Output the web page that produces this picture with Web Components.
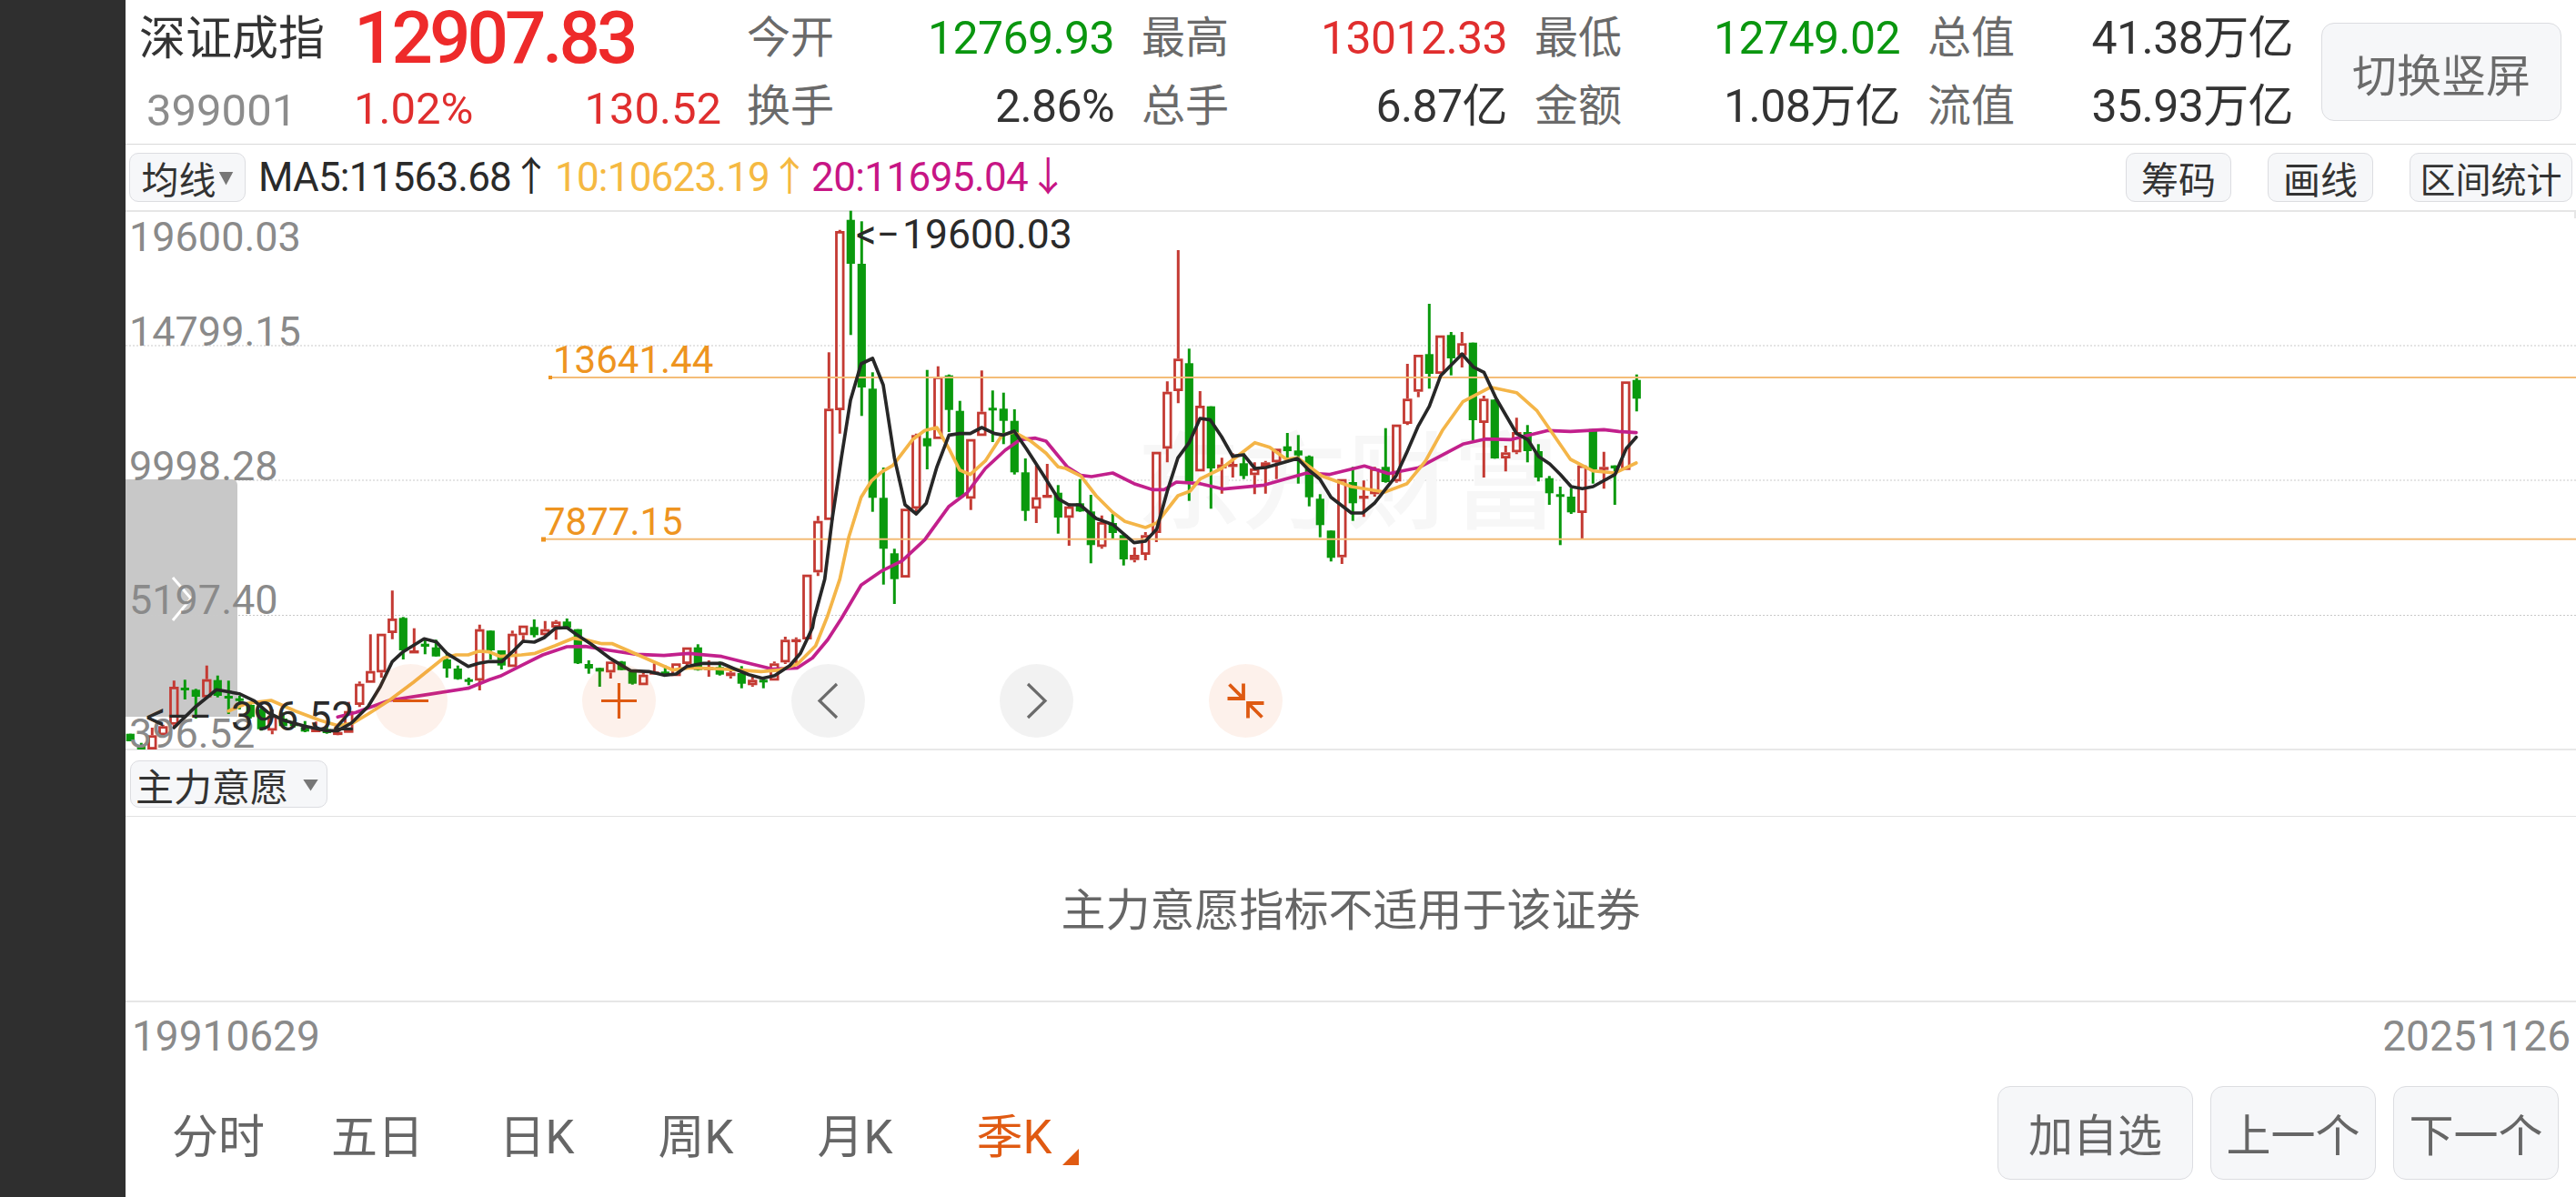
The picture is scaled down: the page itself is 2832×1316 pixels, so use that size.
<!DOCTYPE html>
<html lang="zh"><head><meta charset="utf-8"><title>深证成指</title>
<style>
html,body{margin:0;padding:0;background:#fff;overflow:hidden}
body{width:2832px;height:1316px;font-family:Roboto,"Noto Sans CJK SC",sans-serif;color:#333}
</style></head>
<body>
<kline-app>
  <quote-header></quote-header>
  <ma-toolbar></ma-toolbar>
  <kline-chart></kline-chart>
  <indicator-pane></indicator-pane>
  <date-axis></date-axis>
  <period-bar></period-bar>
</kline-app>
<script>
function def(name,css,html,init){
  customElements.define(name,class extends HTMLElement{
    constructor(){super();const r=this.attachShadow({mode:'open'});
      r.innerHTML='<style>'+css+'</style>'+(typeof html==='function'?html(this):html);}
    connectedCallback(){if(init&&!this._i){this._i=1;init(this)}}
  });
}
def('kline-app',`:host{display:flex;width:2832px;height:1316px}
 .side{width:138px;flex:none;background:#2f2f2f}
 .main{flex:1;min-width:0;display:flex;flex-direction:column}`,
 `<div class="side"></div><div class="main"><slot></slot></div>`);

def('pill-button',`:host{display:inline-flex;align-items:center;justify-content:center;box-sizing:border-box;
 background:#f6f7f9;border:1.5px solid #dcdde1;border-radius:10px;color:#333;white-space:nowrap}`,`<slot></slot>`);

def('drop-mark',`:host{display:inline-block;width:var(--w,16px);height:var(--h,15px);background:#777;clip-path:polygon(0 0,100% 0,50% 100%)}`,``);

def('quote-cell',`:host{display:flex;align-items:center;padding-right:30px;box-sizing:border-box;font-size:50px;letter-spacing:-.6px;white-space:nowrap}
 .l{width:94px;flex:none;font-size:48px;letter-spacing:0;color:#6a6a6a;line-height:1}
 .v{flex:1;text-align:right;line-height:1}
 :host([first]) .l{margin-left:-2px;width:96px}`,
 el=>`<span class="l">${el.getAttribute('label')}</span><span class="v" style="color:${el.getAttribute('color')||'#333'}">${el.getAttribute('value')}</span>`);

def('quote-header',`:host{display:flex;height:159px;box-sizing:border-box;border-bottom:1.5px solid #d9d9d9;flex:none}
 .left{width:685px;flex:none;box-sizing:border-box;padding:5px 30px 0 15px;display:grid;grid-template-columns:236px 404px;grid-template-rows:74px 76px;align-items:center}
 .name{font-size:51px;color:#333;line-height:1;white-space:nowrap}
 .price{font-size:80px;font-weight:500;letter-spacing:-4px;color:#ee2a2a;line-height:1;grid-column:2}
 .code{font-size:49px;color:#8c8c8c;line-height:1;padding:8px 0 0 8px}
 .sub{display:flex;justify-content:space-between;font-size:49px;color:#e02e2e;line-height:1;padding-top:5px}
 .cells{width:1728px;flex:none;padding-top:5px;display:grid;grid-template-columns:repeat(4,432px);grid-template-rows:74px 76px}
 pill-button{width:264px;height:108px;margin:25px 0 0 1px;font-size:49px;color:#6b6b6b;border-radius:14px}`,
 `<div class="left"><div class="name">深证成指</div><div class="price">12907.83</div>
  <div class="code">399001</div><div class="sub"><span>1.02%</span><span>130.52</span></div></div>
 <div class="cells">
  <quote-cell first label="今开" value="12769.93" color="#0a960f"></quote-cell>
  <quote-cell label="最高" value="13012.33" color="#e02e2e"></quote-cell>
  <quote-cell label="最低" value="12749.02" color="#0a960f"></quote-cell>
  <quote-cell label="总值" value="41.38万亿"></quote-cell>
  <quote-cell first label="换手" value="2.86%"></quote-cell>
  <quote-cell label="总手" value="6.87亿"></quote-cell>
  <quote-cell label="金额" value="1.08万亿"></quote-cell>
  <quote-cell label="流值" value="35.93万亿"></quote-cell>
 </div><pill-button>切换竖屏</pill-button>`);

def('ma-toolbar',`:host{display:flex;align-items:center;height:74px;box-sizing:border-box;border-bottom:2.5px solid #e6e6e6;flex:none;padding:0 4px}
 pill-button{height:54px;font-size:41px}
 .ma{width:128px;gap:3px;margin-right:14px}
 .ma drop-mark{margin-top:2px}
 .legend{display:flex;font-size:44px;letter-spacing:-.8px;white-space:nowrap;line-height:1}
 .a{color:#2a2a2a;width:326px}.b{color:#f5b942;width:282px}.c{color:#c71585;letter-spacing:-.6px}
 .tools{margin-left:auto;display:flex;gap:40px}
 .t2{width:116px}.t4{width:179px;font-size:39px}`,
 `<pill-button class="ma">均线<drop-mark></drop-mark></pill-button>
 <div class="legend"><span class="a">MA5:11563.68↑</span><span class="b">10:10623.19↑</span><span class="c">20:11695.04↓</span></div>
 <div class="tools"><pill-button class="t2">筹码</pill-button><pill-button class="t2">画线</pill-button><pill-button class="t4">区间统计</pill-button></div>`);

def('chart-fab',`:host{display:flex;width:81px;height:81px;border-radius:50%;align-items:center;justify-content:center;background:var(--bg)}
 ::slotted(svg){display:block}`,`<slot></slot>`);

def('kline-chart',`:host{display:block;position:relative;height:590px;flex:none}
 svg.c{display:block;width:2694px;height:590px;font-family:Roboto,sans-serif;overflow:visible}
 .fabs{position:absolute;left:272.5px;top:497px;display:flex;gap:148.5px}
 .o{--bg:rgba(232,96,28,.085)}.g{--bg:rgba(0,0,0,.052)}
 svg.i{width:81px;height:81px;fill:none;stroke-width:3.2}
 .o svg{stroke:#de5a12}.g svg{stroke:#6b6b6b}`,
 `<svg class="c" viewBox="138 233 2694 590" id="s"></svg>
 <div class="fabs">
 <chart-fab class="o"><svg class="i" viewBox="0 0 81 81"><path d="M21 40.5h39"/></svg></chart-fab>
 <chart-fab class="o"><svg class="i" viewBox="0 0 81 81"><path d="M21 40.5h39M40.5 21v39"/></svg></chart-fab>
 <chart-fab class="g"><svg class="i" viewBox="0 0 81 81"><path d="M50 22 31 40.5 50 59"/></svg></chart-fab>
 <chart-fab class="g"><svg class="i" viewBox="0 0 81 81"><path d="M31 22 50 40.5 31 59"/></svg></chart-fab>
 <chart-fab class="o"><svg class="i" viewBox="0 0 81 81" style="stroke-width:3.8"><path d="M38 38 22.5 22.5M38 21.500v16.500H20.500M43 43l15.500 15.500M43 59.500V43h17.500"/></svg></chart-fab>
 </div>`,
 el=>{
  const g1=`G 500 525 500 525|G 538 552 530 552|R 505 552 480 552|R 475 505 470 510|R 345 470 325 480|G 348 352 322 387|G 355 378 352 450|R 320 380 275 380|G 323 375 308 380|G 375 380 325 435|G 383 390 375 420|G 405 445 395 450|G 420 485 410 490|R 440 490 420 502|G 450 475 430 480|G 465 475 455 480|G 478 493 458 495|R 480 495 460 497|G 485 498 470 500|R 494 500 480 505|R 425 497 395 500|R 335 405 328 412|R 293 332 172 335|R 170 298 170 315|R 120 168 28 188|G 118 225 115 255|R 225 230 152 232|G 203 213 190 238|G 215 245 190 245|G 255 285 235 315|G 285 320 275 322|G 320 323 315 340|R 155 325 140 357|G 160 225 160 255|G 225 275 225 288|R 170 280 160 280|R 143 175 143 200|G 148 175 123 182|R 155 175 128 180|R 130 150 125 190|G 130 150 120 155|G 155 268 155 270|G 270 285 258 302|G 283 295 283 345|R 262 298 260 318|G 262 290 260 290|G 295 335 290 338|R 305 340 300 342|R 295 303 268 305|G 295 305 275 310|R 268 310 265 310|R 215 270 213 285|G 215 290 205 292|R 280 290 258 312|G 280 305 262 308|R 298 310 280 318|G 300 335 277 350|R 322 340 312 345|G 322 326 318 350|R 268 325 262 328|R 190 265 180 270|R 188 192 182 275`;
  const g2=`R 1235 1449 1235 1449|R 1058 1228 1042 1240|R 688 1055 502 1055|R 102 693 98 770|G 65 210 35 445|G 210 618 70 712|G 622 982 568 1028|G 982 1150 882 1268|G 1165 1250 1150 1332|R 1018 1245 1018 1245|R 775 1018 770 1035|G 785 812 560 888|R 582 788 548 790|G 578 692 575 765|G 695 980 662 985|R 788 985 788 1022|R 698 778 562 780|G 685 690 628 798|G 688 728 635 805|G 728 898 690 905|G 898 1025 852 1058|R 980 1018 875 1065|R 972 982 870 985|G 965 1047 940 1100|R 1010 1048 1000 1140|G 1000 1027 920 1028|G 1027 1138 972 1198|R 1062 1144 1040 1150|G 1065 1098 1035 1118|G 1105 1185 1100 1205|R 1170 1187 1145 1195|R 1105 1170 1095 1188|R 830 1098 830 1128|R 632 820 598 865`;
  const g3=`R 403 510 45 550|G 418 808 370 872|R 558 775 510 775|G 560 765 560 898|R 752 765 730 848|R 750 760 715 795|G 748 790 715 800|R 765 787 745 850|R 745 760 740 848|R 700 745 700 800|G 692 708 648 745|G 706 722 655 815|G 725 860 722 890|G 865 952 850 992|G 970 1060 970 1072|R 800 1058 800 1080|G 810 880 760 938|R 855 862 805 925|R 765 850 760 858|G 760 810 632 812|R 620 808 620 812|R 535 618 420 622|R 390 512 390 530|G 388 453 222 502|R 326 453 326 455|G 325 402 315 458|R 352 392 315 432|G 350 606 350 672|R 535 615 525 795|G 538 732 538 733|R 712 732 690 775|R 645 712 598 718|G 645 708 622 745|G 708 795 685 808|G 797 847 790 885|G 850 858 825 1018|G 858 910 830 915|R 755 912 752 998|G 635 768 635 815|R 760 768 710 832|G 755 765 755 885|R 478 770 475 770|G 473 535 455 577`;
  const RED='#c43a33',GRN='#0a990d';
  let candles='',idx=0;
  [[640,g1],[220,g2],[260,g3]].forEach(([b,s])=>s.split('|').forEach(r=>{
    const p=r.split(' ');const y=v=>+(b+(+v)/3).toFixed(1);
    const x=143.3+12*idx++;const t=y(p[1]),bo=y(p[2]),h=y(p[3]),l=y(p[4]);
    if(p[0]==='G'){
      candles+=`<path d="M${x} ${h}V${l}" stroke="${GRN}" stroke-width="3"/><rect x="${x-4.6}" y="${t}" width="9.2" height="${Math.max(bo-t,3)}" fill="${GRN}"/>`;
    }else{
      const d=(h<t-1?`M${x} ${h}V${t}`:'')+(l>bo+1?`M${x} ${bo}V${l}`:'');
      candles+=(d?`<path d="${d}" stroke="${RED}" stroke-width="3"/>`:'')+`<rect x="${x-3.8}" y="${t+1.4}" width="7.6" height="${Math.max(bo-t-2.8,.6)}" fill="none" stroke="${RED}" stroke-width="2.8"/>`;
    }
  }));
  const z11=a=>seg(138,3,640,3,a),z12=a=>seg(530,3,640,3,a),z5=a=>seg(800,3,220,3,a),z6=a=>seg(1200,2.45,260,3,a);
  function seg(x0,sx,y0,sy,a){const o=[];for(let i=0;i<a.length;i+=2)o.push([x0+a[i]/sx,y0+a[i+1]/sy]);return o}
  function line(parts,col,w){let last=-1,o=[];parts.flat().forEach(p=>{if(p[0]>last){o.push(p[0].toFixed(1)+','+p[1].toFixed(1));last=p[0]}});
    return `<polyline points="${o.join(' ')}" fill="none" stroke="${col}" stroke-width="${w}" stroke-linejoin="round" stroke-linecap="round"/>`}
  const mag=line([z11([700,445,760,430,870,390,1000,370,1130,350,1200,322]),
   z12([0,325,60,310,130,275,200,240,280,213,340,212,420,225,510,238,600,242,680,235,790,245,880,268,960,287,1040,283,1090,250,1140,190]),
   z5([375,1380,440,1270,510,1222,575,1190,650,1120,730,1010,790,965,850,885,915,825,965,790,1015,785,1050,795,1120,880,1165,908,1200,912,1270,900,1340,935,1400,955,1440,955,1480,930,1558,935]),
   z6([355,833,465,820,580,780,640,785,735,757,800,782,880,763,1000,685,1060,668,1130,670,1230,640,1290,643,1380,637,1420,643,1467,647])],'#c2208c',3.7);
  const ora=line([z11([340,425,400,400,480,390,560,425,640,455,700,473,750,465,800,435,870,390,950,330,1050,250,1090,240,1130,240,1165,228,1200,230]),
   z12([60,245,130,240,175,235,240,210,300,185,340,190,395,203,430,203,480,225,560,260,630,290,680,283,760,285,850,290,920,295,980,290,1040,270,1100,210,1140,110]),
   z5([330,1380,370,1250,400,1110,440,980,475,925,510,895,545,875,610,790,650,760,690,750,730,820,765,890,800,905,850,860,905,775,945,765,1000,795,1050,835,1090,880,1115,885,1165,910,1215,975,1270,1030,1310,1060,1378,1080,1415,1065,1485,975,1525,960,1558,920]),
   z6([350,765,440,680,480,695,525,735,555,730,620,790,700,825,790,843,850,815,900,740,945,640,1000,545,1075,497,1145,515,1200,575,1290,735,1350,773,1410,780,1467,747])],'#f4b548',3.7);
  const blk=line([z11([160,480,232,410,300,355,375,368,425,392,470,430,520,455,590,475,660,490,700,490,745,465,800,410,840,345,880,262,915,230,985,187,1025,197,1060,235,1130,278,1165,268,1200,262]),
   z12([65,262,100,230,135,195,172,198,205,183,242,152,280,150,310,172,360,205,420,250,490,292,550,295,600,307,640,303,675,278,730,268,790,268,830,285,880,305,925,317,965,308,1015,275,1050,235,1090,150]),
   z5([285,1380,320,1250,345,1050,375,850,405,660,440,540,478,522,513,610,550,850,585,1005,622,1035,655,1000,690,880,730,775,765,770,800,770,838,750,880,770,910,775,945,762,985,820,1040,905,1090,985,1125,1005,1162,1005,1215,1050,1270,1070,1340,1130,1378,1125,1415,1085,1450,960,1485,850,1522,800,1558,720]),
   z6([292,598,320,605,350,660,380,725,410,720,440,765,470,762,555,732,585,770,615,800,645,860,700,912,730,912,762,880,820,790,850,710,880,625,910,560,940,460,998,388,1028,430,1057,448,1090,535,1145,650,1175,670,1204,725,1234,750,1263,785,1292,825,1322,832,1351,825,1410,785,1440,700,1467,662])],'#272727',3.7);
  const gl=y=>`<line x1="138" x2="2832" y1="${y}" y2="${y}" stroke="#c9c9c9" stroke-width="1" stroke-dasharray="2 2"/>`;
  const lab=(t,y)=>`<text x="142" y="${y}" font-size="45" fill="#8a8a8a">${t}</text>`;
  el.shadowRoot.getElementById('s').innerHTML=
   `<path d="M138 527H255a6 6 0 0 1 6 6V788H138Z" fill="#c8c8c8"/>`+
   `<path d="M2831 233V240" stroke="#e6e6e6" stroke-width="2"/>`+
   gl(380)+gl(528)+gl(676.500)+
   `<text x="1249" y="572" font-size="116" font-weight="500" fill="#f7f7f7" style="font-family:'Noto Sans CJK SC',sans-serif">东方财富</text>`+
   candles+
   `<path d="M605 415H2832M597 592.700H2832" stroke="#f4bd78" stroke-width="2"/>`+
   `<rect x="603" y="413" width="4" height="4" fill="#ee9420"/><rect x="595" y="590.500" width="5" height="5" fill="#ee9420"/>`+
   mag+ora+blk+
   `<path d="M190 635 210 658 190 682" fill="none" stroke="#fff" stroke-width="3"/>`+
   lab('19600.03',276)+lab('14799.15',380)+lab('9998.28',528)+lab('5197.40',675)+lab('396.52',822)+
   `<text x="608" y="410" font-size="42" fill="#ee9420">13641.44</text>`+
   `<text x="598" y="588" font-size="42" fill="#ee9420">7877.15</text>`+
   `<text y="273" font-size="44.500" fill="#2a2a2a"><tspan x="941">&lt;−</tspan><tspan x="992">19600.03</tspan></text>`+
   `<text y="803" font-size="44" fill="#2a2a2a"><tspan x="160">&lt;−−</tspan><tspan x="254">396.52</tspan></text>`;
 });

def('indicator-pane',`:host{display:flex;flex-direction:column;height:279px;box-sizing:border-box;border-top:2px solid #e8e8e8;border-bottom:2px solid #e6e6e6;flex:none}
 .bar{height:73px;box-sizing:border-box;border-bottom:1.5px solid #e2e2e2;padding:11px 0 0 5px;flex:none}
 pill-button{width:217px;height:52px;font-size:42px;gap:16px;justify-content:flex-start;padding-left:5px}
 drop-mark{--w:17px;--h:13px;margin-top:2px}
 .msg{flex:1;display:flex;align-items:center;justify-content:center;font-size:49px;color:#666;padding-bottom:5px}`,
 `<div class="bar"><pill-button>主力意愿<drop-mark></drop-mark></pill-button></div><div class="msg">主力意愿指标不适用于该证券</div>`);

def('date-axis',`:host{display:flex;justify-content:space-between;height:66px;box-sizing:border-box;padding:7px 6px 0 7px;align-items:center;font-size:46px;color:#8a8a8a;flex:none;line-height:1}`,
 `<span>19910629</span><span>20251126</span>`);

def('period-tab',`:host{display:flex;align-items:center;justify-content:center;position:relative;font-size:51px;color:#666;padding-top:1px;box-sizing:border-box;white-space:nowrap}
 :host([active]){color:#e05a12}
 :host([active])::after{content:"";position:absolute;right:16.500px;bottom:16px;width:18px;height:18px;background:#e05a12;clip-path:polygon(100% 0,100% 100%,0 100%)}`,`<slot></slot>`);

def('period-bar',`:host{display:flex;flex:1;padding:26px 19px 0 14.500px;box-sizing:border-box;align-items:flex-start}
 .tabs{display:grid;grid-auto-flow:column;grid-auto-columns:175px;height:103px}
 .btns{margin-left:auto;display:flex;gap:19px}
 pill-button{height:103px;width:182px;font-size:49px;color:#666;border-radius:14px;padding-bottom:2px}
 .add{width:215px}`,
 `<div class="tabs"><period-tab>分时</period-tab><period-tab>五日</period-tab><period-tab>日K</period-tab><period-tab>周K</period-tab><period-tab>月K</period-tab><period-tab active>季K</period-tab></div>
 <div class="btns"><pill-button class="add">加自选</pill-button><pill-button>上一个</pill-button><pill-button>下一个</pill-button></div>`);
</script>
</body></html>
